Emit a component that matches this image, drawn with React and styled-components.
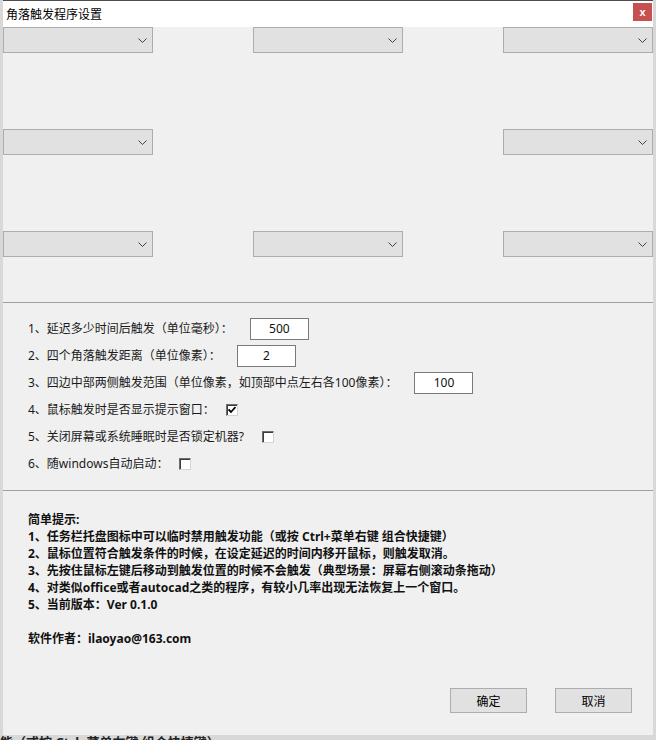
import React from "react";
import styled, { createGlobalStyle } from "styled-components";

const Global = createGlobalStyle`
  html, body { margin: 0; padding: 0; }
  body {
    background: #dcdcdc;
    font-family: "Noto Sans", "Noto Sans CJK SC", sans-serif;
    color: #000;
  }
  * { box-sizing: border-box; }
`;

const Page = styled.div`
  width: 656px;
  height: 740px;
  overflow: hidden;
  background: #d8d8d8;
  display: flex;
  flex-direction: column;
`;

const Window = styled.div`
  margin: 0 3px;
  width: 650px;
  height: 735px;
  flex: none;
  border-top: 1px solid #4e4e4e;
  background: #f0f0f0;
  display: flex;
  flex-direction: column;
`;

const TitleBar = styled.div`
  height: 26px;
  background: #ffffff;
  display: flex;
  align-items: center;
  justify-content: space-between;
  padding: 0 1px 0 3px;
`;

const Title = styled.span`
  font-family: "Noto Sans CJK SC", sans-serif;
  font-size: 12px;
  line-height: 16px;
  margin-top: -1px;
`;

const CloseButton = styled.div`
  width: 19px;
  height: 18px;
  margin-top: -4px;
  background: #c75050;
  color: #fff;
  font-family: "Liberation Sans", sans-serif;
  font-weight: bold;
  font-size: 11px;
  line-height: 16px;
  display: flex;
  align-items: center;
  justify-content: center;
`;

const SelectGrid = styled.div`
  display: grid;
  grid-template-columns: repeat(3, 150px);
  grid-template-rows: repeat(3, 26px);
  column-gap: 100px;
  row-gap: 76px;
  padding-bottom: 45px;
`;

const Select = styled.div`
  height: 26px;
  border: 1px solid #adadad;
  background: #e1e1e1;
  display: flex;
  align-items: center;
  justify-content: flex-end;
  padding-right: 5px;
`;

const Divider = styled.div`
  height: 1px;
  background: #a0a0a0;
  flex: none;
`;

const Settings = styled.div`
  padding: 12px 0 13px 25px;
  display: flex;
  flex-direction: column;
`;

const Row = styled.div`
  height: 27px;
  display: flex;
  align-items: center;
  gap: ${(p) => p.$gap}px;
`;

const Label = styled.span`
  font-family: "Noto Sans", "Noto Sans CJK SC", sans-serif;
  font-size: 12px;
  line-height: 16px;
  color: #1a1a1a;
  white-space: nowrap;
`;

const NumberBox = styled.div`
  width: 59px;
  height: 22px;
  border: 1px solid #7a7a7a;
  background: #fff;
  font-family: "Noto Sans", sans-serif;
  font-size: 12px;
  display: flex;
  align-items: center;
  justify-content: center;
  color: #111;
`;

const Check = styled.div`
  width: 12px;
  height: 12px;
  margin-top: 1px;
  background: #fff;
  border-top: 1px solid #6e6e6e;
  border-left: 1px solid #6e6e6e;
  border-right: 1px solid #d4d4d4;
  border-bottom: 1px solid #d4d4d4;
  box-shadow: inset 1px 1px 0 #3c3c3c;
  display: flex;
  align-items: center;
  justify-content: center;
`;

const Tips = styled.div`
  padding: 20px 0 0 25px;
  display: flex;
  flex-direction: column;
`;

const TipLine = styled.div`
  font-family: "Noto Sans", "Noto Sans CJK SC", sans-serif;
  font-weight: bold;
  font-size: 12px;
  line-height: 17px;
  height: 17px;
  white-space: nowrap;
  color: #111;
`;

const Footer = styled.div`
  margin-top: auto;
  display: flex;
  justify-content: flex-end;
  gap: 28px;
  padding: 0 21px 22px 0;
`;

const Button = styled.div`
  width: 77px;
  height: 25px;
  border: 1px solid #adadad;
  background: #e1e1e1;
  font-family: "Noto Sans CJK SC", sans-serif;
  font-size: 12px;
  display: flex;
  align-items: center;
  justify-content: center;
`;

const Backdrop = styled.div`
  height: 5px;
  overflow: hidden;
`;

const BackdropText = styled.div`
  font-family: "Noto Sans", "Noto Sans CJK SC", sans-serif;
  font-weight: bold;
  font-size: 13px;
  line-height: 16px;
  margin-top: -1px;
  white-space: nowrap;
  color: #222;
`;

const Chevron = () => (
  <svg width="9" height="5" viewBox="0 0 9 5">
    <polyline points="0.5,0.5 4.5,4.5 8.5,0.5" fill="none" stroke="#404040" strokeWidth="1" />
  </svg>
);

const CheckMark = () => (
  <svg width="8" height="8" viewBox="0 0 8 8">
    <polyline points="0.5,3.5 3,6 7.5,1" fill="none" stroke="#000" strokeWidth="1.8" />
  </svg>
);

const selects = [true, true, true, true, false, true, true, true, true];

const settings = [
  { label: "1、延迟多少时间后触发（单位毫秒）：", gap: 17, value: "500" },
  { label: "2、四个角落触发距离（单位像素）：", gap: 16, value: "2" },
  { label: "3、四边中部两侧触发范围（单位像素，如顶部中点左右各100像素）：", gap: 17, value: "100" },
  { label: "4、鼠标触发时是否显示提示窗口：", gap: 11, check: true },
  { label: "5、关闭屏幕或系统睡眠时是否锁定机器?", gap: 18, check: false },
  { label: "6、随windows自动启动：", gap: 11, check: false },
];

const tips = [
  "简单提示:",
  "1、任务栏托盘图标中可以临时禁用触发功能（或按 Ctrl+菜单右键 组合快捷键）",
  "2、鼠标位置符合触发条件的时候，在设定延迟的时间内移开鼠标，则触发取消。",
  "3、先按住鼠标左键后移动到触发位置的时候不会触发（典型场景：屏幕右侧滚动条拖动）",
  "4、对类似office或者autocad之类的程序，有较小几率出现无法恢复上一个窗口。",
  "5、当前版本：Ver 0.1.0",
  "",
  "软件作者：ilaoyao@163.com",
];

export default function App() {
  return (
    <>
      <Global />
      <Page>
        <Window>
          <TitleBar>
            <Title>角落触发程序设置</Title>
            <CloseButton>x</CloseButton>
          </TitleBar>
          <SelectGrid>
            {selects.map((s, i) =>
              s ? (
                <Select key={i}>
                  <Chevron />
                </Select>
              ) : (
                <span key={i} />
              )
            )}
          </SelectGrid>
          <Divider />
          <Settings>
            {settings.map((s, i) => (
              <Row key={i} $gap={s.gap}>
                <Label>{s.label}</Label>
                {s.value !== undefined ? (
                  <NumberBox>{s.value}</NumberBox>
                ) : (
                  <Check>{s.check && <CheckMark />}</Check>
                )}
              </Row>
            ))}
          </Settings>
          <Divider />
          <Tips>
            {tips.map((t, i) => (
              <TipLine key={i}>{t}</TipLine>
            ))}
          </Tips>
          <Footer>
            <Button>确定</Button>
            <Button>取消</Button>
          </Footer>
        </Window>
        <Backdrop>
          <BackdropText>能（或按 Ctrl+菜单右键 组合快捷键）</BackdropText>
        </Backdrop>
      </Page>
    </>
  );
}
